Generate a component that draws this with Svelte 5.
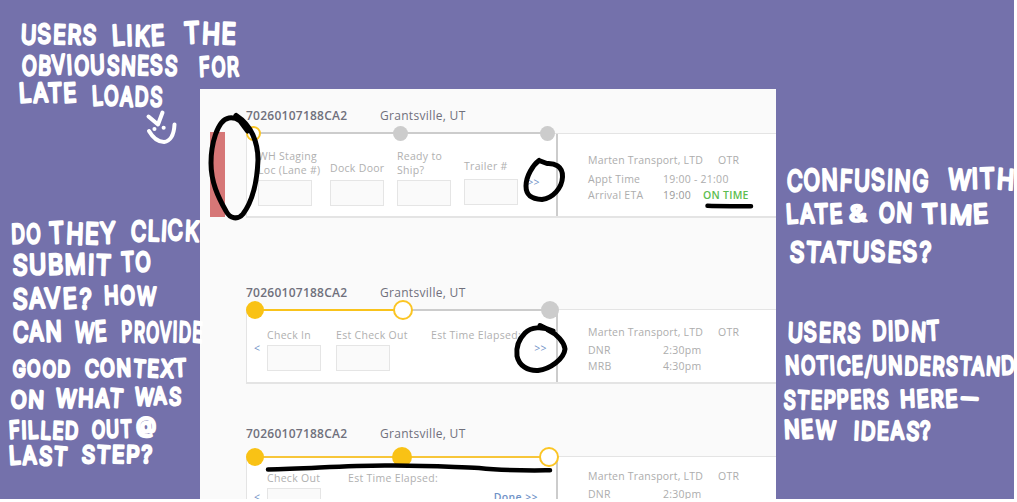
<script>
  // Handwritten words: text, left, right, top, bottom
  const notes = [
    ['USERS', 20, 96, 23, 45], ['LIKE', 112, 165, 24, 47], ['THE', 184, 236, 21, 45],
    ['OBVIOUSNESS', 21, 177, 54, 76], ['FOR', 199, 239, 56, 78],
    ['LATE', 19, 77, 82, 104], ['LOADS', 92, 162, 85, 107],
    ['DO', 11, 41, 223, 245], ['THEY', 49, 116, 221, 245], ['CLICK', 130, 199, 219, 242],
    ['SUBMIT', 12, 111, 253, 276], ['TO', 121, 151, 251, 273],
    ['SAVE?', 12, 91, 287, 310], ['HOW', 104, 156, 285, 306],
    ['CAN', 12, 62, 320, 343], ['WE', 74, 107, 320, 343], ['PROVIDE', 121, 202, 320, 343],
    ['GOOD', 12, 70, 359, 378], ['CONTEXT', 84, 187, 358, 378],
    ['ON', 10, 44, 389, 409], ['WHAT', 55, 123, 387, 408], ['WAS', 134, 181, 386, 406],
    ['FILLED', 9, 78, 420, 440], ['OUT', 91, 132, 419, 439], ['@', 136, 157, 416, 435],
    ['LAST', 9, 67, 445, 466], ['STEP?', 81, 152, 444, 464],
    ['CONFUSING', 786, 928, 168, 192], ['WITH', 947, 1014, 167, 190],
    ['LATE', 786, 843, 203, 225], ['&', 849, 867, 204, 223], ['ON', 878, 912, 201, 223], ['TIME', 922, 989, 203, 225],
    ['STATUSES?', 789, 931, 240, 263],
    ['USERS', 787, 860, 321, 343], ['DIDNT', 872, 940, 320, 342],
    ['NOTICE/UNDERSTAND', 785, 1015, 355, 376],
    ['STEPPERS', 783, 889, 389, 410], ['HERE', 900, 958, 389, 409], ['–', 961, 977, 387, 407],
    ['NEW', 784, 836, 419, 440], ['IDEAS?', 853, 931, 420, 441]
  ];
  // Slight per-letter tilt, as in hand lettering
  const tilt = (word) => [...word].map((c, i) => [-3, 3, -2, 4, -4, 2][(i + c.charCodeAt(0)) % 6]).join(' ');
  const gap = (word) => (word.length > 1 ? 2 : 0);
  const loads = [
    { cls: 'first', late: true, line: 'todo', nodes: ['open small', 'todo small', 'todo small'],
      fields: [['WH Staging\nLoc (Lane #)', 1], ['Dock Door', 1], ['Ready to\nShip?', 1], ['Trailer #', 1]],
      next: '>>', info: [['Appt Time', '19:00 - 21:00'], ['Arrival ETA', '19:00', 'ON TIME']] },
    { cls: 'second', back: true, line: 'half', nodes: ['done', 'open', 'todo'],
      fields: [['Check In', 1], ['Est Check Out', 1], ['Est Time Elapsed:', 0]],
      next: '>>', info: [['DNR', '2:30pm'], ['MRB', '4:30pm']] },
    { cls: 'third', back: true, line: 'full', nodes: ['done', 'done big', 'open'],
      fields: [['Check Out', 1], ['Est Time Elapsed:', 0]],
      next: 'Done >>', info: [['DNR', '2:30pm'], ['MRB', '4:30pm']] }
  ];
</script>

<div class="board">
  <main class="panel">
    {#each loads as load}
      <section class="load {load.cls}">
        <header><b>70260107188CA2</b><span>Grantsville, UT</span></header>
        <div class="card">
          {#if load.late}<i class="late"></i>{/if}
          <div class="track {load.line}">
            {#each load.nodes as node}<i class="node {node}"></i>{/each}
          </div>
          <div class="step">
            {#if load.back}<a class="back">&lt;</a>{/if}
            <div class="fields">
              {#each load.fields as [label, box]}
                <div class="field" class:plain={!box}><label>{label}</label>{#if box}<i class="box"></i>{/if}</div>
              {/each}
            </div>
            <a class="next">{load.next}</a>
          </div>
          <div class="info">
            <div class="carrier"><span>Marten Transport, LTD</span><span>OTR</span></div>
            {#each load.info as [name, value, status]}
              <div class="line"><span>{name}</span><span class:strong={status}>{value}</span>{#if status}<b>{status}</b>{/if}</div>
            {/each}
          </div>
        </div>
      </section>
    {/each}
  </main>

  <svg class="ink" width="1014" height="499" viewBox="0 0 1014 499">
    <g class="words">
      {#each notes as [word, l, r, t, b]}
        <text x={l + 0.5} y={b - 1.6} rotate={tilt(word)} letter-spacing={gap(word)} font-size={(b - t - 3) / 0.727} textLength={r - l - 1 + gap(word)} lengthAdjust="spacingAndGlyphs">{word}</text>
      {/each}
    </g>
    <g class="white">
      <path d="M148.500 116.500L158 124.500L162.500 112.500" />
      <path d="M149 131C153 138 158 142 164 142C171 141 174 134 174.500 124.500" />
      <path d="M154.400 129h.1M163.600 127.700h.1" />
    </g>
    <g class="black">
      <path d="M236 115.500L247.500 131M247 129C242 121 236 117 229 118C217 120 211 145 211 163C211 182 218 197 226 211C230 219 238 220 243 214C251 203 257 186 258 160C258 142 251 125 237 116" />
      <path d="M539 160.500C533 165 526 176 526 186C526 196 532 199 542 199.500C553 198 562 188 562.500 177C563 166 554 163 547 163.500L539 160.500" />
      <path d="M540 325.500L553 332M553 331C542 326 531 327 525 333C518 340 516 348 517 356C519 366 528 371 538 370.500C550 369 564 359 565 349C564 342 557 334 548 330" />
      <path class="bar" d="M707.500 205.800C721 206.500 736 206 751 206.300" />
      <path class="bar" d="M268 469.400C307 469 341 465.500 385 465.500C424 465 449 467 479 468C506 471 529 470.500 550 470.300" />
    </g>
  </svg>
</div>

<style>
  :global(body) { margin: 0; background: #fff; }
  .board { position: relative; width: 1014px; height: 499px; overflow: hidden; background: #7471ab; font-family: "Open Sans", "Noto Sans", sans-serif; }
  .panel { margin: 0 0 0 200px; width: 576px; height: 410px; overflow: hidden; background: #fafafa; transform: translateY(89px); }
  .load { padding-left: 46px; box-sizing: border-box; }
  .first { height: 177px; padding-top: 18px; }
  .second { height: 141px; padding-top: 18px; }
  .third { padding-top: 18px; }
  header { display: flex; height: 26px; font-size: 12px; line-height: 17px; color: #70707c; white-space: nowrap; }
  header b { width: 134px; font-weight: 600; letter-spacing: .25px; }
  header span { font-weight: 500; letter-spacing: .3px; }
  .card { position: relative; display: grid; grid-template-columns: 311px 1fr; height: 85px; box-sizing: border-box; background: #fff; border: solid #e4e4e4; border-width: 1px 0 2px 1px; }
  .second .card { height: 75px; }
  .third .card { height: 85px; }
  .second header { height: 25px; }
  .third header { height: 31px; }
  .late { position: absolute; left: -37px; top: -2px; width: 15px; height: 85px; background: #d67777; }
  .track { position: absolute; z-index: 1; left: -1px; top: -14px; width: 313px; height: 28px; display: flex; justify-content: space-between; align-items: center; }
  .track::before { content: ""; position: absolute; left: 8px; right: 8px; top: 12.500px; height: 2px; background: #ccc; }
  .first .track { width: 309px; top: -15px; }
  .first .track::before { top: 13px; }
  .half::before { background: linear-gradient(90deg, #f9c31b 50%, #ccc 50%); }
  .full::before { background: #f7c63a; height: 2.500px; }
  .node { position: relative; box-sizing: border-box; width: 18px; height: 18px; border-radius: 50%; }
  .node.small { width: 15px; height: 15px; }
  .done { background: #f9c215; }
  .big { width: 20px; height: 20px; }
  .todo.node { background: #ccc; }
  .open { width: 20px; height: 20px; background: #fff; border: 2px solid #fbc524; }
  .step { position: relative; border-right: 2px solid #ccc; box-sizing: border-box; }
  .fields { display: flex; }
  label { display: flex; align-items: flex-end; white-space: pre; font-size: 10.500px; line-height: 14px; letter-spacing: .3px; color: #b0b0b0; }
  .box { display: block; box-sizing: border-box; width: 54px; height: 26px; border: 1px solid #e5e5e5; background: #fafafa; }
  .first .fields { padding: 14px 0 0 11px; }
  .first .field { width: 72px; }
  .first .field:nth-child(2) { width: 67px; }
  .first .field:nth-child(3) { width: 67px; }
  .first label { height: 29px; margin-bottom: 3px; }
  .first .field:nth-child(2) label { padding-bottom: 2px; height: 27px; }
  .first .field:nth-child(4) label { padding-bottom: 3px; height: 25px; }
  .second .fields, .third .fields { padding: 18px 0 0 20px; }
  .second .field { width: 69px; }
  .second label, .third label { height: 14px; margin-bottom: 3px; }
  .second .plain { padding-left: 26px; }
  .third .fields { padding-top: 14px; }
  .third .field { width: 81px; }
  a { position: absolute; color: #6f92c7; font-size: 10.500px; line-height: 14px; letter-spacing: .4px; white-space: nowrap; }
  .back { left: 7px; top: 31px; }
  .third .back { top: 33px; }
  .next { right: 9px; top: 31px; }
  .first .next { right: 16px; top: 41px; }
  .third .next { right: 18px; top: 33px; font-weight: 600; }
  .info { padding: 19px 0 0 30px; color: #adadad; font-size: 10.500px; letter-spacing: .25px; white-space: nowrap; }
  .second .info { padding-top: 15px; }
  .third .info { padding-top: 12px; }
  .carrier { height: 19px; line-height: 14px; display: flex; gap: 15px; letter-spacing: .2px; }
  .second .carrier, .third .carrier { height: 18px; }
  .line { display: flex; height: 16px; line-height: 14px; }
  .line span:first-child { width: 75px; }
  .line span + b { margin-left: 12px; font-weight: 600; color: #5cbd50; }
  .strong { font-weight: 500; color: #999; }
  .ink { position: absolute; z-index: 3; left: 0; top: 0; overflow: hidden; }
  .words { font-family: Inter, sans-serif; font-weight: 400; fill: #fff; stroke: #fff; stroke-width: 2.700; stroke-linejoin: round; }
  .white, .black { fill: none; stroke: #fff; stroke-width: 4; stroke-linecap: round; stroke-linejoin: round; }
  .black { stroke: #000; stroke-width: 5; }
  .black .bar { stroke-width: 4.500; }
</style>
